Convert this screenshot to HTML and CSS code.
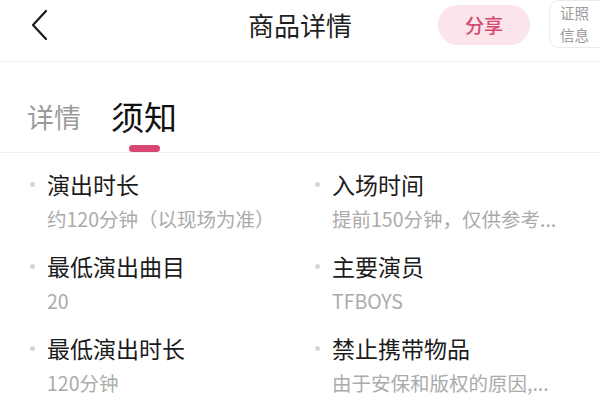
FILE: index.html
```html
<!DOCTYPE html>
<html lang="zh-CN">
<head>
<meta charset="utf-8">
<title>商品详情</title>
<link rel="stylesheet" href="styles.css">
</head>
<body>
<div class="page">
  <header class="header">
    <div class="side side-left">
      <svg class="back" width="20" height="32" viewBox="0 0 20 32" aria-hidden="true">
        <path d="M16 2 L3 16 L16 30" fill="none" stroke="#1a1a1a" stroke-width="2.2" stroke-linecap="round" stroke-linejoin="round"/>
      </svg>
    </div>
    <h1 class="title">商品详情</h1>
    <div class="side side-right">
      <button class="share">分享</button>
      <div class="license">证照<br>信息</div>
    </div>
  </header>

  <nav class="tabs">
    <div class="tab">详情</div>
    <div class="tab tab-active">须知<span class="bar"></span></div>
  </nav>

  <section class="notes">
    <div class="item">
      <div class="item-title"><span class="dot"></span>演出时长</div>
      <div class="item-desc">约120分钟（以现场为准）</div>
    </div>
    <div class="item">
      <div class="item-title"><span class="dot"></span>入场时间</div>
      <div class="item-desc">提前150分钟，仅供参考...</div>
    </div>
    <div class="item">
      <div class="item-title"><span class="dot"></span>最低演出曲目</div>
      <div class="item-desc">20</div>
    </div>
    <div class="item">
      <div class="item-title"><span class="dot"></span>主要演员</div>
      <div class="item-desc">TFBOYS</div>
    </div>
    <div class="item">
      <div class="item-title"><span class="dot"></span>最低演出时长</div>
      <div class="item-desc">120分钟</div>
    </div>
    <div class="item">
      <div class="item-title"><span class="dot"></span>禁止携带物品</div>
      <div class="item-desc">由于安保和版权的原因,...</div>
    </div>
  </section>
</div>
</body>
</html>
```

FILE: styles.css
```css
* { box-sizing: border-box; }
html, body {
  margin: 0;
  padding: 0;
  background: #ffffff;
}
body {
  width: 600px;
  height: 410px;
  overflow: hidden;
  font-family: "Noto Sans CJK SC", "Noto Sans", "Liberation Sans", sans-serif;
  color: #1f1f1f;
}
.page {
  width: 600px;
}

/* header */
.header {
  display: flex;
  align-items: center;
  height: 62px;
  padding-bottom: 12px;
  border-bottom: 1px solid #f1f1f1;
}
.side {
  width: 162px;
  height: 50px;
  display: flex;
  align-items: center;
  flex: none;
}
.side-left {
  padding-left: 30px;
}
.back {
  display: block;
  margin-top: 1px;
}
.title {
  flex: 1;
  margin: 0;
  text-align: center;
  font-size: 26px;
  font-weight: 400;
  line-height: 36px;
  color: #1f1f1f;
}
.side-right {
  align-items: flex-start;
}
.share {
  flex: none;
  margin-top: 5px;
  width: 92px;
  height: 40px;
  border: none;
  border-radius: 20px;
  background: #fce4eb;
  color: #d44a73;
  font-family: inherit;
  font-size: 19px;
  font-weight: 500;
  line-height: 40px;
  padding: 0;
}
.license {
  flex: none;
  margin-left: 19px;
  width: 64px;
  height: 48px;
  border: 1px solid #ebebeb;
  border-radius: 9px;
  padding: 1px 0 0 10px;
  font-size: 14.5px;
  line-height: 22px;
  color: #9a9a9a;
}

/* tabs */
.tabs {
  display: flex;
  align-items: flex-start;
  gap: 30px;
  height: 91px;
  padding: 33px 0 0 27px;
  border-bottom: 1px solid #eeeeee;
}
.tab {
  display: flex;
  flex-direction: column;
  align-items: center;
  font-size: 27px;
  line-height: 40px;
  color: #9b9b9b;
  margin-top: 2px;
}
.tab-active {
  font-size: 33px;
  line-height: 42px;
  color: #111111;
  margin-top: 0;
}
.bar {
  display: block;
  width: 31px;
  height: 7px;
  margin-top: 8px;
  border-radius: 4px;
  background: #d9466f;
}

/* notes */
.notes {
  display: grid;
  grid-template-columns: 285px 285px;
  row-gap: 16px;
  padding: 14px 0 0 30px;
}
.item {
  display: flex;
  flex-direction: column;
}
.item-title {
  display: flex;
  align-items: center;
  font-size: 23px;
  line-height: 34px;
  color: #1c1c1c;
}
.dot {
  width: 5px;
  height: 5px;
  border-radius: 50%;
  background: #d6d6d6;
  margin-right: 12px;
  flex: none;
}
.item-desc {
  margin-top: 4px;
  padding-left: 17px;
  font-size: 19.5px;
  line-height: 28px;
  color: #ababab;
  white-space: nowrap;
}
```
